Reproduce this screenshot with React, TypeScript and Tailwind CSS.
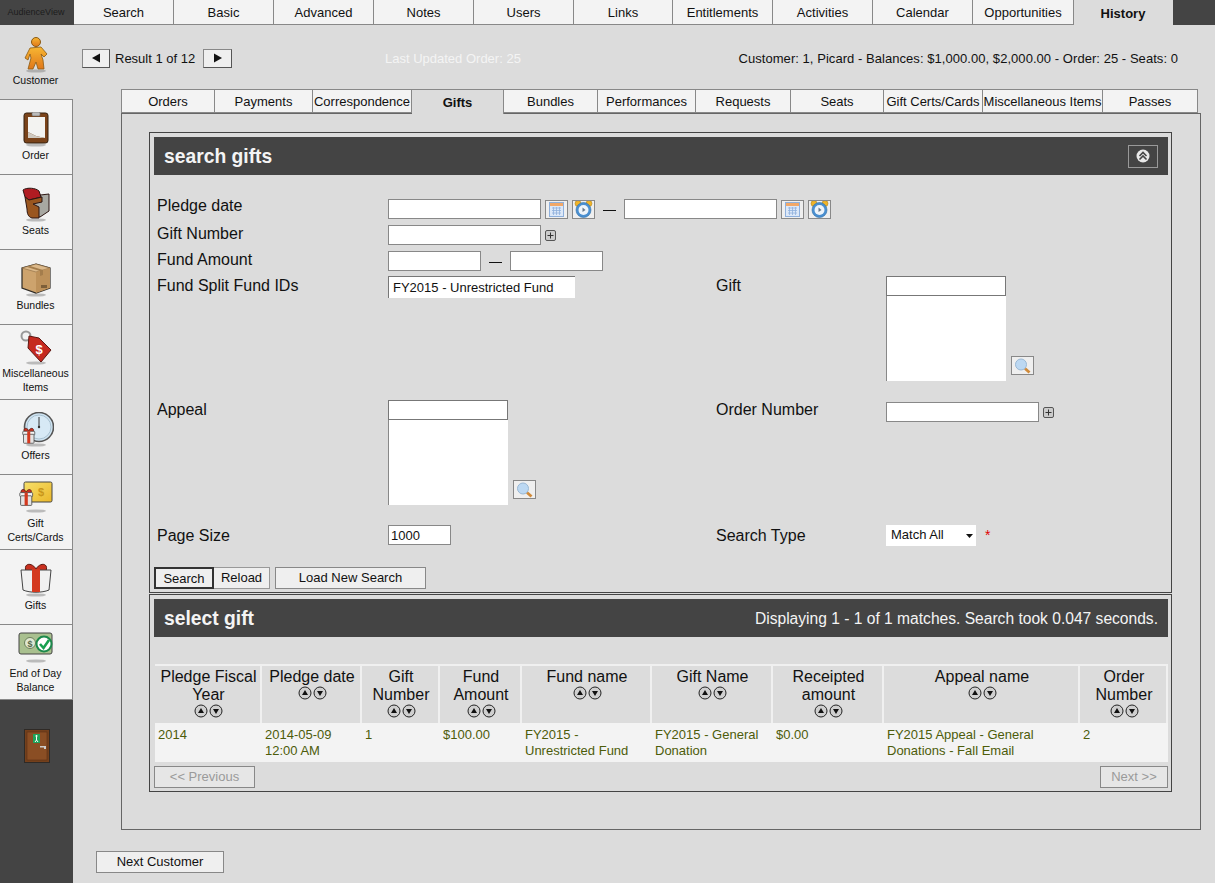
import React from 'react';

const topTabs = [
  { label: 'Search', w: 'w-[100px]' },
  { label: 'Basic', w: 'w-[100px]' },
  { label: 'Advanced', w: 'w-[100px]' },
  { label: 'Notes', w: 'w-[100px]' },
  { label: 'Users', w: 'w-[100px]' },
  { label: 'Links', w: 'w-[99px]' },
  { label: 'Entitlements', w: 'w-[100px]' },
  { label: 'Activities', w: 'w-[100px]' },
  { label: 'Calendar', w: 'w-[100px]' },
  { label: 'Opportunities', w: 'w-[101px]' },
];

const subTabs = [
  { label: 'Orders', w: 'w-[94px]' },
  { label: 'Payments', w: 'w-[98px]' },
  { label: 'Correspondence', w: 'w-[99px]' },
  { label: 'Gifts', w: 'w-[92px]', active: true },
  { label: 'Bundles', w: 'w-[94px]' },
  { label: 'Performances', w: 'w-[98px]' },
  { label: 'Requests', w: 'w-[95px]' },
  { label: 'Seats', w: 'w-[93px]' },
  { label: 'Gift Certs/Cards', w: 'w-[99px]' },
  { label: 'Miscellaneous Items', w: 'w-[120px]' },
  { label: 'Passes', w: 'w-[95px]' },
];

const columns = [
  { label: 'Pledge Fiscal Year', w: 'w-[107px]' },
  { label: 'Pledge date', w: 'w-[100px]' },
  { label: 'Gift Number', w: 'w-[78px]' },
  { label: 'Fund Amount', w: 'w-[82px]' },
  { label: 'Fund name', w: 'w-[130px]' },
  { label: 'Gift Name', w: 'w-[121px]' },
  { label: 'Receipted amount', w: 'w-[111px]' },
  { label: 'Appeal name', w: 'w-[196px]' },
  { label: 'Order Number', w: 'w-[88px]' },
];

const row = ['2014', '2014-05-09 12:00 AM', '1', '$100.00', 'FY2015 - Unrestricted Fund', 'FY2015 - General Donation', '$0.00', 'FY2015 Appeal - General Donations - Fall Email', '2'];

function GiftBox({ x = 0, y = 0, s = 1 }: { x?: number; y?: number; s?: number }) {
  return (
    <g transform={`translate(${x} ${y}) scale(${s})`}>
      <path d="M3 8 C1 3 6 1 9 6 C12 1 17 3 15 8Z" fill="#c9301f" stroke="#5a1a12" strokeWidth="1" />
      <rect x="1" y="7" width="16" height="5" rx="1" fill="#f4f4f4" stroke="#444" strokeWidth="1" />
      <rect x="2" y="11" width="14" height="12" rx="1" fill="#e4e4e4" stroke="#444" strokeWidth="1" />
      <rect x="7" y="7" width="4" height="16" fill="#d4391f" />
    </g>
  );
}

function Shadow({ y = 33 }: { y?: number }) {
  return <ellipse cx="18" cy={y} rx="10" ry="1.6" fill="#777" opacity="0.45" />;
}

function CustomerIcon() {
  return (
    <svg width="36" height="36" viewBox="0 0 36 36">
      <defs>
        <linearGradient id="cust" x1="0" y1="0" x2="0" y2="1">
          <stop offset="0" stopColor="#f7b733" />
          <stop offset="1" stopColor="#e0771a" />
        </linearGradient>
      </defs>
      <Shadow y={34} />
      <circle cx="18" cy="5" r="4.5" fill="url(#cust)" stroke="#8a5a14" />
      <path d="M12 11 L23 10 L29 17 L26 20 L23 17 L25 23 L26 32 L20 32 L18 25 L15 32 L10 32 L13 21 L12 17 L10 23 L7 21Z" fill="url(#cust)" stroke="#8a5a14" strokeWidth="0.8" />
    </svg>
  );
}

function OrderIcon() {
  return (
    <svg width="36" height="36" viewBox="0 0 36 36">
      <Shadow />
      <rect x="6" y="1" width="24" height="30" rx="2.5" fill="#7a431a" stroke="#33200f" />
      <path d="M10 5 H27 V26 L18 24 L10 20Z" fill="#f3f3f1" />
      <path d="M10 20 L18 24 L27 26 H10Z" fill="#cfc9c0" />
      <rect x="14" y="0" width="8" height="4" rx="1" fill="#bbb" stroke="#666" strokeWidth="0.6" />
    </svg>
  );
}

function SeatIcon() {
  return (
    <svg width="36" height="36" viewBox="0 0 36 36">
      <Shadow />
      <path d="M14 9 L31 7 V24 L22 30 L14 28Z" fill="#a8a8a2" stroke="#2b1512" />
      <path d="M5 3 C9 0 18 1 21 4 L23 10 L11 13 L7 10Z" fill="#b01c22" stroke="#2b1512" />
      <path d="M7 10 L11 13 L24 10 V15 L15 17 L21 20 V31 H14 C10 30 9 26 9 22Z" fill="#9a561f" stroke="#2b1512" />
    </svg>
  );
}

function BundleIcon() {
  return (
    <svg width="36" height="36" viewBox="0 0 36 36">
      <Shadow />
      <path d="M18 2 L32 6 V26 L18 31 L4 26 V6Z" fill="#cda36d" stroke="#2e2a25" strokeWidth="1.2" />
      <path d="M4 6 L18 10 L32 6 L18 2Z" fill="#dcb98a" stroke="#8a6a42" strokeWidth="0.6" />
      <path d="M18 10 V31 L32 26 V6Z" fill="#bd915a" />
      <path d="M12 4 L25 8 V13 L22 14 V9 L9 5Z" fill="#a47d4c" />
      <rect x="23" y="23" width="6" height="3" fill="#7d5f39" />
    </svg>
  );
}

function TagIcon() {
  return (
    <svg width="36" height="36" viewBox="0 0 36 36">
      <Shadow />
      <circle cx="8" cy="6" r="4.5" fill="none" stroke="#999" strokeWidth="2" />
      <path d="M11 6 L21 8 L33 20 L23 32 L10 18Z" fill="#c52a20" stroke="#5d1712" />
      <text x="21" y="24" fontSize="13" fontWeight="700" fill="#fff" textAnchor="middle" className="[font-family:'Liberation_Sans',sans-serif]">$</text>
    </svg>
  );
}

function OffersIcon() {
  return (
    <svg width="36" height="36" viewBox="0 0 36 36">
      <Shadow />
      <circle cx="21" cy="15" r="14.5" fill="#cfe4f2" stroke="#555" strokeWidth="1.6" />
      <circle cx="21" cy="15" r="12" fill="#d7e9f5" stroke="#9db6c6" strokeWidth="0.8" />
      <path d="M21 5 V15" stroke="#333" strokeWidth="1" />
      <circle cx="21" cy="15" r="1.2" fill="#333" />
      <GiftBox x={4} y={14} s={0.75} />
    </svg>
  );
}

function CardIcon() {
  return (
    <svg width="36" height="36" viewBox="0 0 36 36">
      <defs>
        <linearGradient id="card" x1="0" y1="0" x2="1" y2="1">
          <stop offset="0" stopColor="#f7e06a" />
          <stop offset="1" stopColor="#eab72a" />
        </linearGradient>
      </defs>
      <Shadow y={31} />
      <rect x="6" y="2" width="28" height="20" rx="1.5" fill="url(#card)" stroke="#444" />
      <text x="23" y="16" fontSize="11" fontWeight="700" fill="#c9961a" textAnchor="middle" className="[font-family:'Liberation_Sans',sans-serif]">$</text>
      <GiftBox x={1} y={7} s={0.8} />
    </svg>
  );
}

function GiftIcon() {
  return (
    <svg width="36" height="36" viewBox="0 0 36 36">
      <Shadow />
      <path d="M8 9 C5 1 14 0 18 7 C22 0 31 1 28 9Z" fill="#c9301f" stroke="#5a1a12" />
      <path d="M3 8 H33 L31 28 C24 31 12 31 5 28Z" fill="#f0f0f0" stroke="#444" />
      <rect x="14" y="7" width="8" height="23" fill="#d4391f" />
    </svg>
  );
}

function BalanceIcon() {
  return (
    <svg width="36" height="36" viewBox="0 0 36 36">
      <Shadow y={31} />
      <rect x="1" y="3" width="33" height="21" rx="2" fill="#a9c08f" stroke="#444" />
      <circle cx="12" cy="13" r="5.5" fill="#dfe8d2" stroke="#6b7f5a" />
      <text x="12" y="16.5" fontSize="9" fontWeight="700" fill="#56684a" textAnchor="middle" className="[font-family:'Liberation_Sans',sans-serif]">$</text>
      <circle cx="26" cy="14" r="7.5" fill="#fff" stroke="#1d8a4c" strokeWidth="2" />
      <path d="M22 14 L25.5 18 L31 10" fill="none" stroke="#18a04f" strokeWidth="2.6" />
    </svg>
  );
}

function DoorIcon() {
  return (
    <svg width="26" height="34" viewBox="0 0 26 34">
      <rect x="0.5" y="0.5" width="25" height="33" fill="#74401c" stroke="#2f2a26" />
      <rect x="3" y="3" width="20" height="28" fill="#8a4e24" stroke="#5a3014" strokeWidth="0.6" />
      <rect x="9" y="5" width="7" height="9" fill="#1fa35a" />
      <circle cx="12.5" cy="7" r="1" fill="#fff" />
      <path d="M12.5 8 V11 M11 13 L12.5 11 L14 13" stroke="#fff" strokeWidth="1" fill="none" />
      <path d="M16 17 H22 V20 H20 V18.5 H16Z" fill="#ccc" />
    </svg>
  );
}

const navItems = [
  { label: ['Customer'], icon: <CustomerIcon />, plain: true },
  { label: ['Order'], icon: <OrderIcon /> },
  { label: ['Seats'], icon: <SeatIcon /> },
  { label: ['Bundles'], icon: <BundleIcon /> },
  { label: ['Miscellaneous', 'Items'], icon: <TagIcon /> },
  { label: ['Offers'], icon: <OffersIcon /> },
  { label: ['Gift', 'Certs/Cards'], icon: <CardIcon /> },
  { label: ['Gifts'], icon: <GiftIcon /> },
  { label: ['End of Day', 'Balance'], icon: <BalanceIcon /> },
];

function CalendarIcon() {
  return (
    <svg width="15" height="15" viewBox="0 0 15 15">
      <rect x="0.5" y="0.5" width="14" height="14" fill="#dce8f8" stroke="#8fb0dc" />
      <rect x="1" y="1" width="13" height="3" fill="#f2a868" />
      <path d="M3 6 H12 M3 8.5 H12 M3 11 H12 M4.5 5 V13 M7.5 5 V13 M10.5 5 V13" stroke="#8fb0dc" strokeWidth="0.8" />
    </svg>
  );
}

function ClockIcon() {
  return (
    <svg width="19" height="18" viewBox="0 0 19 18">
      <circle cx="4" cy="3.5" r="3" fill="#f0b429" stroke="#a07a1c" strokeWidth="0.5" />
      <circle cx="15" cy="3.5" r="3" fill="#f0b429" stroke="#a07a1c" strokeWidth="0.5" />
      <circle cx="9.5" cy="10" r="7.5" fill="#4a8fd0" stroke="#2f6fa8" strokeWidth="0.6" />
      <circle cx="9.5" cy="10" r="5" fill="#eef4fa" />
      <path d="M8.5 7.5 L11.5 10 L8.5 12Z" fill="#66788a" />
    </svg>
  );
}

function IconButton({ children }: { children: React.ReactNode }) {
  return (
    <button className="flex h-[19px] w-[23px] items-center justify-center overflow-hidden border border-[#888] bg-[#efefef]">
      {children}
    </button>
  );
}

function Plus() {
  return (
    <svg width="11" height="11" viewBox="0 0 11 11" className="ml-[4px]">
      <rect x="0.5" y="0.5" width="10" height="10" rx="1.5" fill="#ccc" stroke="#555" />
      <path d="M2.5 5.5 H8.5 M5.5 2.5 V8.5" stroke="#333" />
    </svg>
  );
}

function Magnifier() {
  return (
    <svg width="17" height="16" viewBox="0 0 17 16">
      <path d="M11 10.5 L15.5 14.5" stroke="#d08a3a" strokeWidth="2.8" />
      <circle cx="7" cy="6.5" r="5.5" fill="#bcd8f2" stroke="#9ab8d4" strokeWidth="1" />
    </svg>
  );
}

function SortButtons() {
  return (
    <span className="flex justify-center gap-[1px]">
      <svg width="14" height="14" viewBox="0 0 14 14">
        <circle cx="7" cy="7" r="6" fill="#cfcfcf" stroke="#222" />
        <path d="M7 4 L10 9 H4Z" fill="#111" />
      </svg>
      <svg width="14" height="14" viewBox="0 0 14 14">
        <circle cx="7" cy="7" r="6" fill="#cfcfcf" stroke="#222" />
        <path d="M7 10 L10 5 H4Z" fill="#111" />
      </svg>
    </span>
  );
}

function Field({ w }: { w: string }) {
  return <input readOnly className={`h-[20px] ${w} border border-[#888] bg-white px-[2px] text-[13px] outline-none`} />;
}

function Dash() {
  return <span className="mx-[8px] mt-[3px] h-[1px] w-[13px] bg-[#111]" />;
}

function ListPicker() {
  return (
    <div className="w-[120px]">
      <input readOnly className="block h-[20px] w-full border border-[#777] bg-white outline-none" />
      <div className="h-[85px] w-full border-l border-[#888] bg-white" />
    </div>
  );
}

function Label({ children, w, className = '' }: { children: React.ReactNode; w: string; className?: string }) {
  return <label className={`${w} shrink-0 text-[16px] leading-[18px] text-[#111] ${className}`}>{children}</label>;
}

function SectionHeader({ title, right, h }: { title: string; right: React.ReactNode; h: string }) {
  return (
    <div className={`flex ${h} items-center justify-between bg-[#444] pl-[10px] pr-[10px]`}>
      <h2 className="mt-[2px] text-[19.3px] font-bold text-[#f4f4f4]">{title}</h2>
      {right}
    </div>
  );
}

export default function App() {
  return (
    <div className="flex h-[883px] w-[1215px] overflow-hidden bg-[#dcdcdc] text-[#111] [font-family:'Liberation_Sans',Arial,sans-serif]">
      {/* Left nav */}
      <aside className="flex h-full w-[73px] shrink-0 flex-col bg-[#444]">
        <div className="flex h-[25px] items-center justify-center pr-[1px] text-[9px] text-[#1c1c1c]">AudienceView</div>
        {navItems.map((item) => (
          <button
            key={item.label.join(' ')}
            className={`flex h-[75px] flex-col items-center justify-center border-r border-[#888] text-[10.5px] leading-[14px] text-[#111] ${
              item.plain ? 'border-r-0 border-b border-b-[#888] bg-[#dcdcdc] pr-[2px]' : 'border-b border-b-[#888] bg-[#f3f3f3] pr-[1px]'
            }`}
          >
            <span className="flex h-[36px] items-center justify-center">{item.icon}</span>
            {item.label.map((l) => (
              <span key={l}>{l}</span>
            ))}
          </button>
        ))}
        <div className="flex justify-center pt-[29px]">
          <DoorIcon />
        </div>
      </aside>

      <main className="flex min-w-0 flex-1 flex-col">
        {/* Top tabs */}
        <nav className="flex h-[25px] bg-[#444] pl-[1px]">
          {topTabs.map((t) => (
            <div key={t.label} className={`flex h-[25px] ${t.w} items-center justify-center border-r border-b border-[#888] bg-[#f3f3f3] pt-[1px] text-[13px]`}>
              {t.label}
            </div>
          ))}
          <div className="flex h-[25px] w-[99px] items-center justify-center bg-[#dcdcdc] pr-[1px] pt-[3px] text-[13px] font-bold">History</div>
        </nav>

        {/* Result row */}
        <div className="flex h-[64px] items-center pt-[2px] text-[13px]">
          <button className="ml-[9px] flex h-[19px] w-[28px] items-center justify-center border border-[#888] border-r-[#555] border-b-[#555] bg-[#efefef]">
            <svg width="10" height="10" viewBox="0 0 10 10"><path d="M1 5 L9 0.5 V9.5Z" fill="#111" /></svg>
          </button>
          <span className="ml-[5px] w-[88px] pt-[1px]">Result 1 of 12</span>
          <button className="flex h-[19px] w-[29px] items-center justify-center border border-[#888] border-r-[#555] border-b-[#555] bg-[#efefef]">
            <svg width="10" height="10" viewBox="0 0 10 10"><path d="M9 5 L1 0.5 V9.5Z" fill="#111" /></svg>
          </button>
          <span className="ml-[153px] pt-[1px] text-[#f4f4f4]">Last Updated Order: 25</span>
          <span className="ml-auto mr-[37px] pt-[1px] tracking-[0.05px]">Customer: 1, Picard - Balances: $1,000.00, $2,000.00 - Order: 25 - Seats: 0</span>
        </div>

        {/* Sub tabs and panel */}
        <div className="ml-[48px] w-[1080px]">
          <div className="flex h-[24px]">
            {subTabs.map((t) => (
              <div
                key={t.label}
                className={`flex ${t.w} shrink-0 items-center justify-center whitespace-nowrap border-t border-r border-[#888] pt-[2px] text-[13px] first:border-l ${
                  t.active ? 'relative z-10 h-[25px] bg-[#dcdcdc] font-bold' : 'h-[24px] border-b bg-[#f3f3f3]'
                }`}
              >
                {t.label}
              </div>
            ))}
          </div>

          <div className="h-[717px] border border-[#666] pl-[27px] pr-[28px] pt-[18px]">
            {/* Search gifts */}
            <section className="h-[461px] w-[1023px] border border-[#444] pl-[4px] pr-[3px] pt-[4px]">
              <SectionHeader
                title="search gifts"
                h="h-[38px]"
                right={
                  <button className="flex h-[23px] w-[30px] items-center justify-center border border-[#999]">
                    <svg width="14" height="14" viewBox="0 0 14 14">
                      <circle cx="7" cy="7" r="6.5" fill="#e8e8e8" />
                      <path d="M3.5 7 L7 3.5 L10.5 7 M3.5 10.5 L7 7 L10.5 10.5" fill="none" stroke="#444" strokeWidth="1.6" />
                    </svg>
                  </button>
                }
              />
              <div className="pl-[3px] pt-[24px]">
                <div className="flex h-[20px] items-center">
                  <Label w="w-[231px]" className="-mt-[7px]">Pledge date</Label>
                  <Field w="w-[153px]" />
                  <div className="ml-[4px] flex gap-[4px]">
                    <IconButton><CalendarIcon /></IconButton>
                    <IconButton><ClockIcon /></IconButton>
                  </div>
                  <Dash />
                  <Field w="w-[153px]" />
                  <div className="ml-[4px] flex gap-[4px]">
                    <IconButton><CalendarIcon /></IconButton>
                    <IconButton><ClockIcon /></IconButton>
                  </div>
                </div>
                <div className="mt-[6px] flex h-[20px] items-center">
                  <Label w="w-[231px]" className="-mt-[3px]">Gift Number</Label>
                  <Field w="w-[153px]" />
                  <Plus />
                </div>
                <div className="mt-[6px] flex h-[20px] items-center">
                  <Label w="w-[231px]" className="-mt-[3px]">Fund Amount</Label>
                  <Field w="w-[93px]" />
                  <Dash />
                  <Field w="w-[93px]" />
                </div>
                <div className="mt-[5px] flex h-[124px] items-start">
                  <Label w="w-[231px]" className="mt-[1px]">Fund Split Fund IDs</Label>
                  <input
                    readOnly
                    defaultValue="FY2015 - Unrestricted Fund"
                    className="h-[22px] w-[187px] border-t border-l border-[#777] bg-white pl-[4px] text-[13px] text-[#111] outline-none"
                  />
                  <Label w="w-[170px]" className="ml-[141px] mt-[1px]">Gift</Label>
                  <ListPicker />
                  <div className="ml-[5px] mt-[80px]">
                    <IconButton><Magnifier /></IconButton>
                  </div>
                </div>
                <div className="flex h-[125px] items-start">
                  <Label w="w-[231px]" className="mt-[1px]">Appeal</Label>
                  <ListPicker />
                  <div className="ml-[5px] mt-[80px]">
                    <IconButton><Magnifier /></IconButton>
                  </div>
                  <Label w="w-[170px]" className="ml-[180px] mt-[1px]">Order Number</Label>
                  <div className="mt-[2px] flex items-center">
                    <Field w="w-[153px]" />
                    <Plus />
                  </div>
                </div>
                <div className="flex h-[21px] items-start">
                  <Label w="w-[231px]" className="mt-[2px]">Page Size</Label>
                  <input readOnly defaultValue="1000" className="h-[20px] w-[63px] border border-[#888] bg-white pl-[2px] pt-[1px] text-[13px] outline-none" />
                  <Label w="w-[170px]" className="ml-[265px] mt-[2px]">Search Type</Label>
                  <div className="relative h-[21px] w-[90px] bg-white">
                    <select className="block h-[19px] w-[90px] appearance-none border-0 bg-transparent pl-[5px] text-[13px] outline-none">
                      <option>Match All</option>
                    </select>
                    <svg width="7" height="4" viewBox="0 0 7 4" className="absolute right-[3px] top-[9px]"><path d="M0 0 H7 L3.5 4Z" fill="#111" /></svg>
                  </div>
                  <span className="ml-[9px] text-[14px] text-[#e00000]">*</span>
                </div>
              </div>
              <div className="mt-[21px] flex h-[22px] text-[13px]">
                <button className="h-[22px] w-[60px] border-2 border-[#333] bg-[#efefef] pb-[1px]">Search</button>
                <button className="h-[22px] w-[56px] border-y border-r border-[#999] bg-[#efefef]">Reload</button>
                <button className="ml-[5px] h-[22px] w-[151px] border border-[#888] bg-[#efefef]">Load New Search</button>
              </div>
            </section>

            {/* Select gift */}
            <section className="mt-[1px] h-[198px] w-[1023px] border border-[#444] pl-[4px] pr-[3px] pt-[4px]">
              <SectionHeader
                title="select gift"
                h="h-[38px]"
                right={<span className="mt-[2px] text-[15.6px] text-[#f4f4f4]">Displaying 1 - 1 of 1 matches. Search took 0.047 seconds.</span>}
              />
              <table className="ml-[1px] mt-[27px] w-[1013px] table-fixed border-separate border-spacing-0 bg-[#f3f3f3]">
                <thead>
                  <tr>
                    {columns.map((c) => (
                      <th key={c.label} className={`${c.w} h-[59px] border-t-2 border-r-2 border-[#f0f0f0] bg-[#dcdcdc] pl-[2px] align-top text-[16px] font-normal leading-[18px]`}>
                        <div className="pt-[2px]">{c.label}</div>
                        <SortButtons />
                      </th>
                    ))}
                  </tr>
                </thead>
                <tbody>
                  <tr>
                    {row.map((cell, i) => (
                      <td key={i} className="h-[39px] px-[3px] pt-[4px] align-top text-[13px] leading-[16px] text-[#4d5c0a]">
                        {cell}
                      </td>
                    ))}
                  </tr>
                </tbody>
              </table>
              <div className="mt-[4px] flex justify-between text-[13px] text-[#9a9a9a]">
                <button className="h-[22px] w-[101px] border border-[#888] bg-[#e6e6e6]">&lt;&lt; Previous</button>
                <button className="h-[22px] w-[68px] border border-[#888] bg-[#e6e6e6]">Next &gt;&gt;</button>
              </div>
            </section>
          </div>
        </div>

        <button className="ml-[23px] mt-[21px] h-[22px] w-[128px] border border-[#888] bg-[#efefef] text-[13px]">Next Customer</button>
      </main>
    </div>
  );
}
